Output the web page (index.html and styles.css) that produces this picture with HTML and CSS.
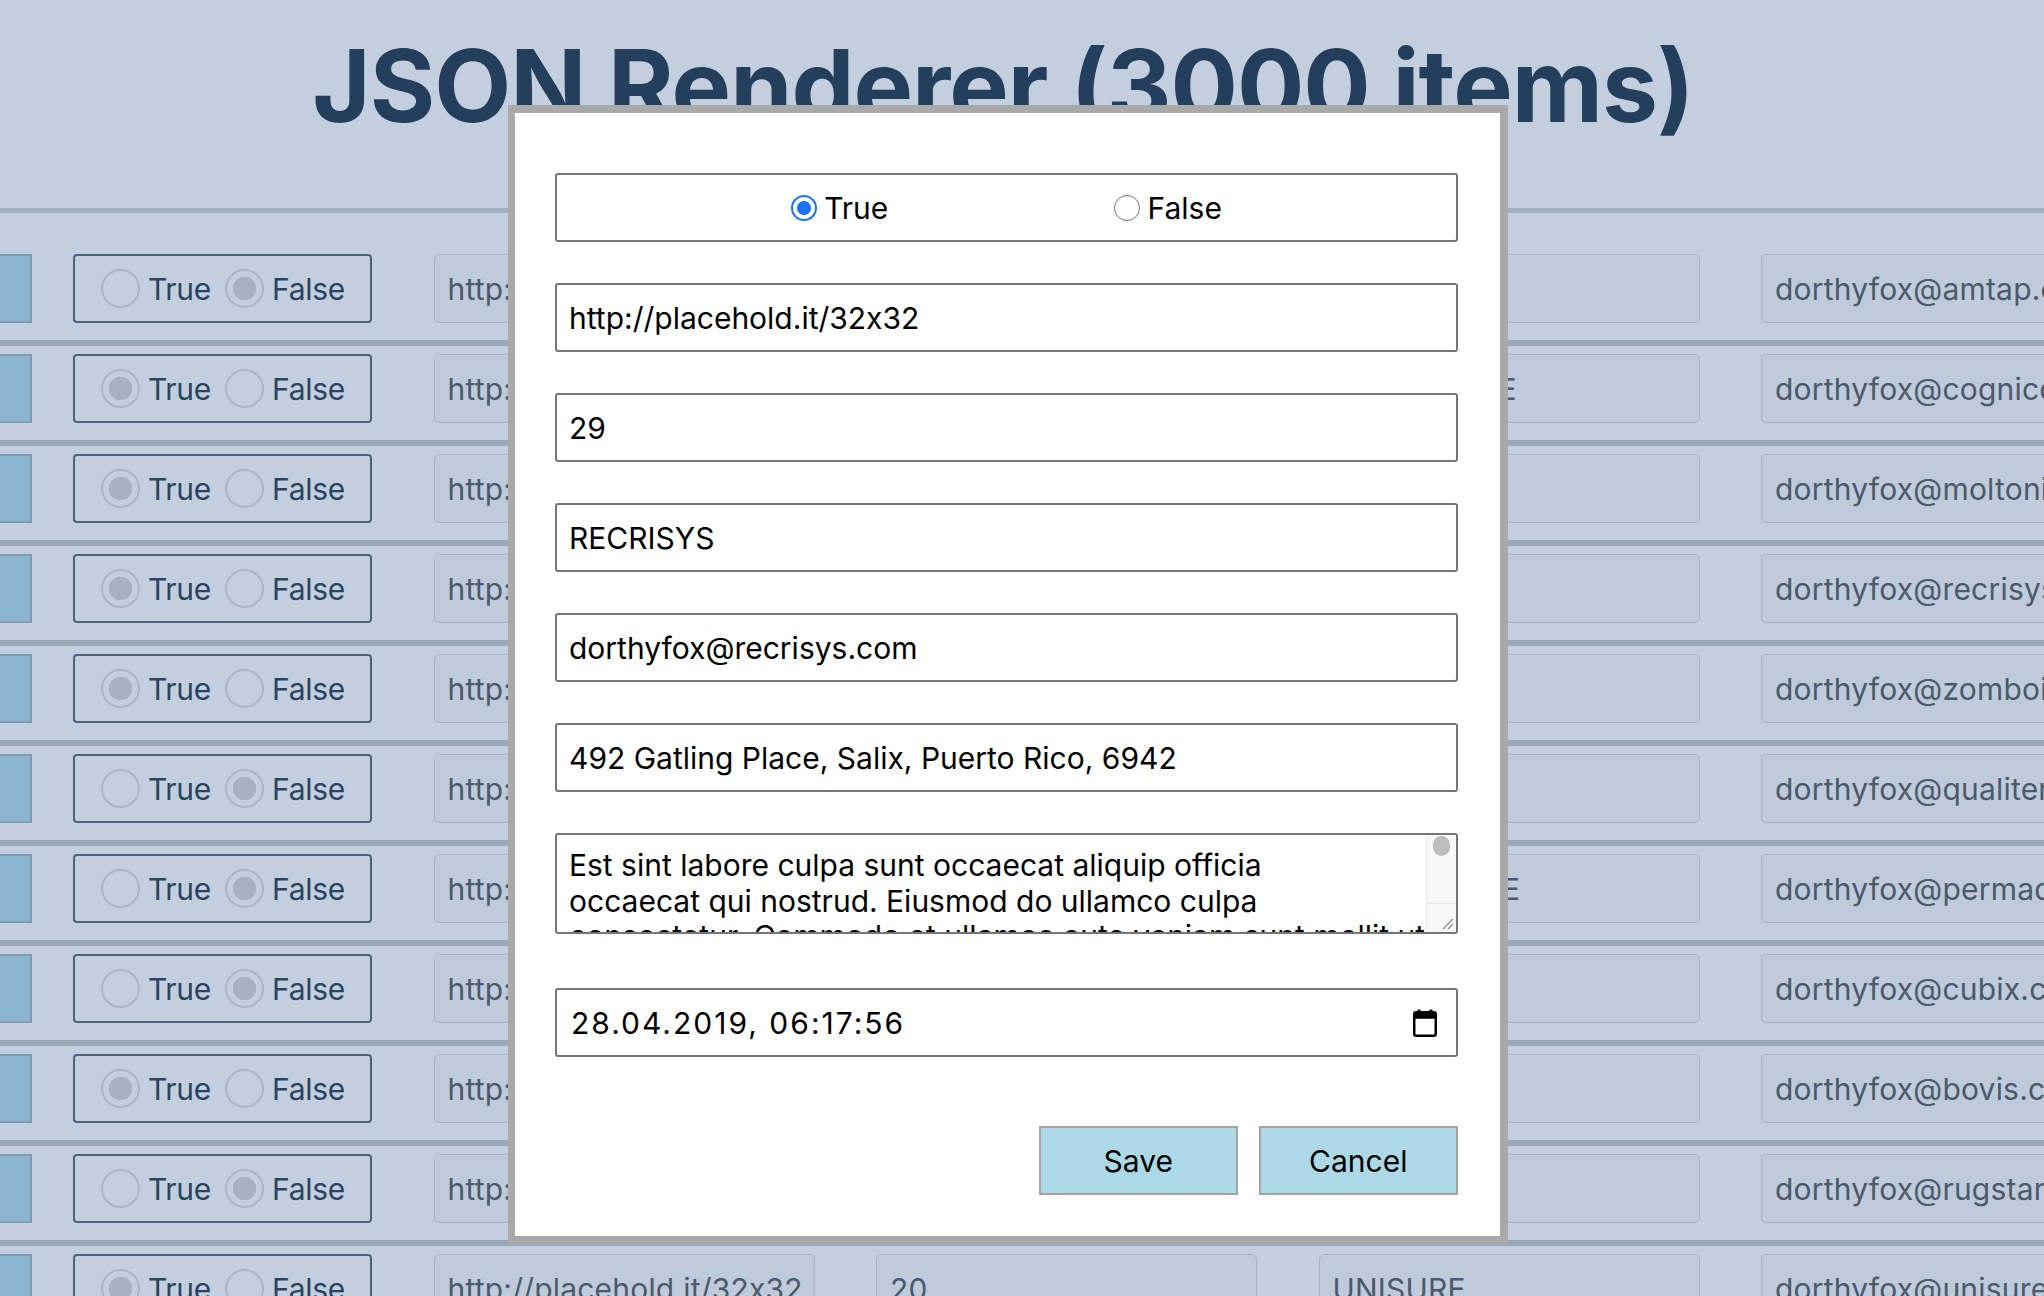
FILE: index.html
```html
<!DOCTYPE html>
<html lang="en">
<head>
<meta charset="utf-8">
<title>JSON Renderer</title>
<link rel="stylesheet" href="styles.css">
</head>
<body>
<header class="page-header">
  <h1>JSON Renderer (3000 items)</h1>
</header>
<main class="list">
  <div class="row">
    <div class="thumb"></div>
    <div class="radios"><span class="rb"></span><span class="rl">True</span><span class="rb on"></span><span class="rl">False</span></div>
    <div class="cell">http://placehold.it/32x32</div>
    <div class="cell">34</div>
    <div class="cell">AMTAP</div>
    <div class="cell">dorthyfox@amtap.com</div>
  </div>
  <div class="row">
    <div class="thumb"></div>
    <div class="radios"><span class="rb on"></span><span class="rl">True</span><span class="rb"></span><span class="rl">False</span></div>
    <div class="cell">http://placehold.it/32x32</div>
    <div class="cell">27</div>
    <div class="cell">COGNICODE</div>
    <div class="cell">dorthyfox@cognicode.com</div>
  </div>
  <div class="row">
    <div class="thumb"></div>
    <div class="radios"><span class="rb on"></span><span class="rl">True</span><span class="rb"></span><span class="rl">False</span></div>
    <div class="cell">http://placehold.it/32x32</div>
    <div class="cell">31</div>
    <div class="cell">MOLTONIC</div>
    <div class="cell">dorthyfox@moltonic.com</div>
  </div>
  <div class="row">
    <div class="thumb"></div>
    <div class="radios"><span class="rb on"></span><span class="rl">True</span><span class="rb"></span><span class="rl">False</span></div>
    <div class="cell">http://placehold.it/32x32</div>
    <div class="cell">29</div>
    <div class="cell">RECRISYS</div>
    <div class="cell">dorthyfox@recrisys.com</div>
  </div>
  <div class="row">
    <div class="thumb"></div>
    <div class="radios"><span class="rb on"></span><span class="rl">True</span><span class="rb"></span><span class="rl">False</span></div>
    <div class="cell">http://placehold.it/32x32</div>
    <div class="cell">38</div>
    <div class="cell">ZOMBOID</div>
    <div class="cell">dorthyfox@zomboid.com</div>
  </div>
  <div class="row">
    <div class="thumb"></div>
    <div class="radios"><span class="rb"></span><span class="rl">True</span><span class="rb on"></span><span class="rl">False</span></div>
    <div class="cell">http://placehold.it/32x32</div>
    <div class="cell">22</div>
    <div class="cell">QUALITEX</div>
    <div class="cell">dorthyfox@qualitern.com</div>
  </div>
  <div class="row">
    <div class="thumb"></div>
    <div class="radios"><span class="rb"></span><span class="rl">True</span><span class="rb on"></span><span class="rl">False</span></div>
    <div class="cell">http://placehold.it/32x32</div>
    <div class="cell">36</div>
    <div class="cell">PERMADYNE</div>
    <div class="cell">dorthyfox@permadyne.com</div>
  </div>
  <div class="row">
    <div class="thumb"></div>
    <div class="radios"><span class="rb"></span><span class="rl">True</span><span class="rb on"></span><span class="rl">False</span></div>
    <div class="cell">http://placehold.it/32x32</div>
    <div class="cell">25</div>
    <div class="cell">CUBIX</div>
    <div class="cell">dorthyfox@cubix.com</div>
  </div>
  <div class="row">
    <div class="thumb"></div>
    <div class="radios"><span class="rb on"></span><span class="rl">True</span><span class="rb"></span><span class="rl">False</span></div>
    <div class="cell">http://placehold.it/32x32</div>
    <div class="cell">33</div>
    <div class="cell">BOVIS</div>
    <div class="cell">dorthyfox@bovis.com</div>
  </div>
  <div class="row">
    <div class="thumb"></div>
    <div class="radios"><span class="rb"></span><span class="rl">True</span><span class="rb on"></span><span class="rl">False</span></div>
    <div class="cell">http://placehold.it/32x32</div>
    <div class="cell">40</div>
    <div class="cell">RUGSTARS</div>
    <div class="cell">dorthyfox@rugstars.com</div>
  </div>
  <div class="row">
    <div class="thumb"></div>
    <div class="radios"><span class="rb on"></span><span class="rl">True</span><span class="rb"></span><span class="rl">False</span></div>
    <div class="cell">http://placehold.it/32x32</div>
    <div class="cell">20</div>
    <div class="cell">UNISURE</div>
    <div class="cell">dorthyfox@unisure.com</div>
  </div>
</main>

<div class="modal">
  <div class="field radio-field">
    <label class="opt"><span class="mr on"></span><span class="ml">True</span></label>
    <label class="opt"><span class="mr"></span><span class="ml">False</span></label>
  </div>
  <div class="field">http://placehold.it/32x32</div>
  <div class="field">29</div>
  <div class="field">RECRISYS</div>
  <div class="field">dorthyfox@recrisys.com</div>
  <div class="field">492 Gatling Place, Salix, Puerto Rico, 6942</div>
  <div class="field ta">
    <div class="ta-text">Est sint labore culpa sunt occaecat aliquip officia<br>occaecat qui nostrud. Eiusmod do ullamco culpa<br>consectetur. Commodo et ullamco aute veniam sunt mollit ut.</div>
    <div class="ta-bar">
      <span class="ta-thumb"></span>
      <span class="ta-corner"><svg width="14" height="14" viewBox="0 0 14 14"><path d="M13 3 L3 13 M13 8 L8 13" stroke="#8a8a8a" stroke-width="1.2" fill="none"/></svg></span>
    </div>
  </div>
  <div class="field date">
    <span class="date-text">28.04.2019, 06:17:56</span>
    <svg class="cal" width="24" height="28" viewBox="0 0 24 28"><rect x="4.5" y="0.5" width="3" height="5" fill="#000"/><rect x="16.5" y="0.5" width="3" height="5" fill="#000"/><rect x="1.25" y="3.25" width="21.5" height="23.5" rx="2" fill="none" stroke="#000" stroke-width="2.5"/><rect x="1.25" y="3.25" width="21.5" height="6.5" fill="#000"/></svg>
  </div>
  <div class="btns">
    <button class="btn">Save</button>
    <button class="btn">Cancel</button>
  </div>
</div>
</body>
</html>
```
FILE: styles.css
```css
html, body {
  margin: 0;
  padding: 0;
}
body {
  width: 2044px;
  height: 1296px;
  overflow: hidden;
  position: relative;
  background: #c3cfdf;
  font-family: Inter, "Noto Sans", sans-serif;
  font-feature-settings: "calt" 0;
}

.page-header {
  height: 208px;
  border-bottom: 5px solid #a2b0c1;
}
.page-header h1 {
  margin: 0;
  padding: 26px 38px 0 0;
  font-size: 100px;
  line-height: 120px;
  font-weight: 700;
  color: #243f5b;
  text-align: center;
  letter-spacing: -1px;
}

.list {
  padding-top: 33px;
}
.row {
  display: flex;
  align-items: center;
  gap: 61.5px;
  padding: 8px 0 17px;
}
.row + .row {
  border-top: 6px solid #9aa8b8;
}
.row > * {
  flex-shrink: 0;
}
.thumb {
  width: 42px;
  height: 69px;
  margin-left: -10px;
  margin-right: -20.5px;
  box-sizing: border-box;
  background: #8db4cf;
  border: 2px solid #7f9cb4;
}
.radios {
  width: 299px;
  height: 69px;
  box-sizing: border-box;
  border: 2px solid #506177;
  border-radius: 4px;
  display: flex;
  align-items: center;
  padding-left: 26px;
  font-size: 30px;
  color: #2a4460;
}
.rb {
  width: 39px;
  height: 39px;
  box-sizing: border-box;
  border-radius: 50%;
  border: 2px solid #aab6c5;
}
.rb.on {
  background: radial-gradient(circle, #a6b2c2 0 11.5px, transparent 12px);
}
.rl {
  margin-left: 8px;
  margin-right: 14px;
  letter-spacing: -0.3px;
}
.cell {
  width: 381px;
  height: 69px;
  box-sizing: border-box;
  border: 1.5px solid #a6b3c4;
  border-radius: 5px;
  background: #bfcbdb;
  padding-left: 13px;
  display: flex;
  align-items: center;
  font-size: 30px;
  letter-spacing: 0.2px;
  color: #4b596a;
  white-space: nowrap;
  overflow: hidden;
}

/* modal dialog, floating over the list */
.modal {
  position: absolute;
  left: 508px;
  top: 105px;
  width: 903px;
  background: #fff;
  border: 8px solid #a9a9a9;
  border-left-width: 7px;
  padding: 60px 42px 41px 40px;
  display: flex;
  flex-direction: column;
  gap: 41px;
}
.field {
  height: 69px;
  box-sizing: border-box;
  border: 2px solid #767676;
  border-radius: 3px;
  padding: 0 12px;
  display: flex;
  align-items: center;
  font-size: 30px;
  color: #000;
  white-space: nowrap;
}
.radio-field {
  justify-content: space-evenly;
  padding: 0 8px;
}
.opt {
  display: flex;
  align-items: center;
}
.mr {
  width: 26px;
  height: 26px;
  box-sizing: border-box;
  border-radius: 50%;
  border: 1.5px solid #767676;
  background: #fff;
}
.mr.on {
  border: 2.5px solid #1a73f0;
  background: radial-gradient(circle, #1a73f0 0 6.5px, #fff 7.5px);
}
.ml {
  margin-left: 7px;
}

.ta {
  height: 101px;
  padding: 0;
  align-items: stretch;
  overflow: hidden;
}
.ta-text {
  flex: 1;
  padding: 13px 12px 0;
  line-height: 35.5px;
  overflow: hidden;
}
.ta-bar {
  width: 29px;
  background: #f8f8f8;
  border-left: 1px solid #e8e8e8;
  display: flex;
  flex-direction: column;
  justify-content: space-between;
  align-items: center;
}
.ta-thumb {
  width: 17px;
  height: 20px;
  border-radius: 9px;
  background: #bdbdbd;
  margin-top: 1px;
}
.ta-corner {
  width: 100%;
  height: 29px;
  border-top: 1px solid #e6e6e6;
  display: flex;
  align-items: flex-end;
  justify-content: flex-end;
  padding: 0 2px 2px 0;
  box-sizing: border-box;
}

.date {
  margin-top: 13px;
  justify-content: space-between;
  padding: 0 19px 0 14px;
}
.date-text {
  letter-spacing: 2px;
}

.btns {
  margin-top: 28px;
  display: flex;
  justify-content: flex-end;
  gap: 20.5px;
}
.btn {
  width: 199.5px;
  height: 69px;
  box-sizing: border-box;
  background: #add8e6;
  border: 2px solid #a3a3a3;
  border-radius: 0;
  font-family: Inter, "Noto Sans", sans-serif;
  font-size: 30px;
  color: #000;
  padding: 0;
}
```
